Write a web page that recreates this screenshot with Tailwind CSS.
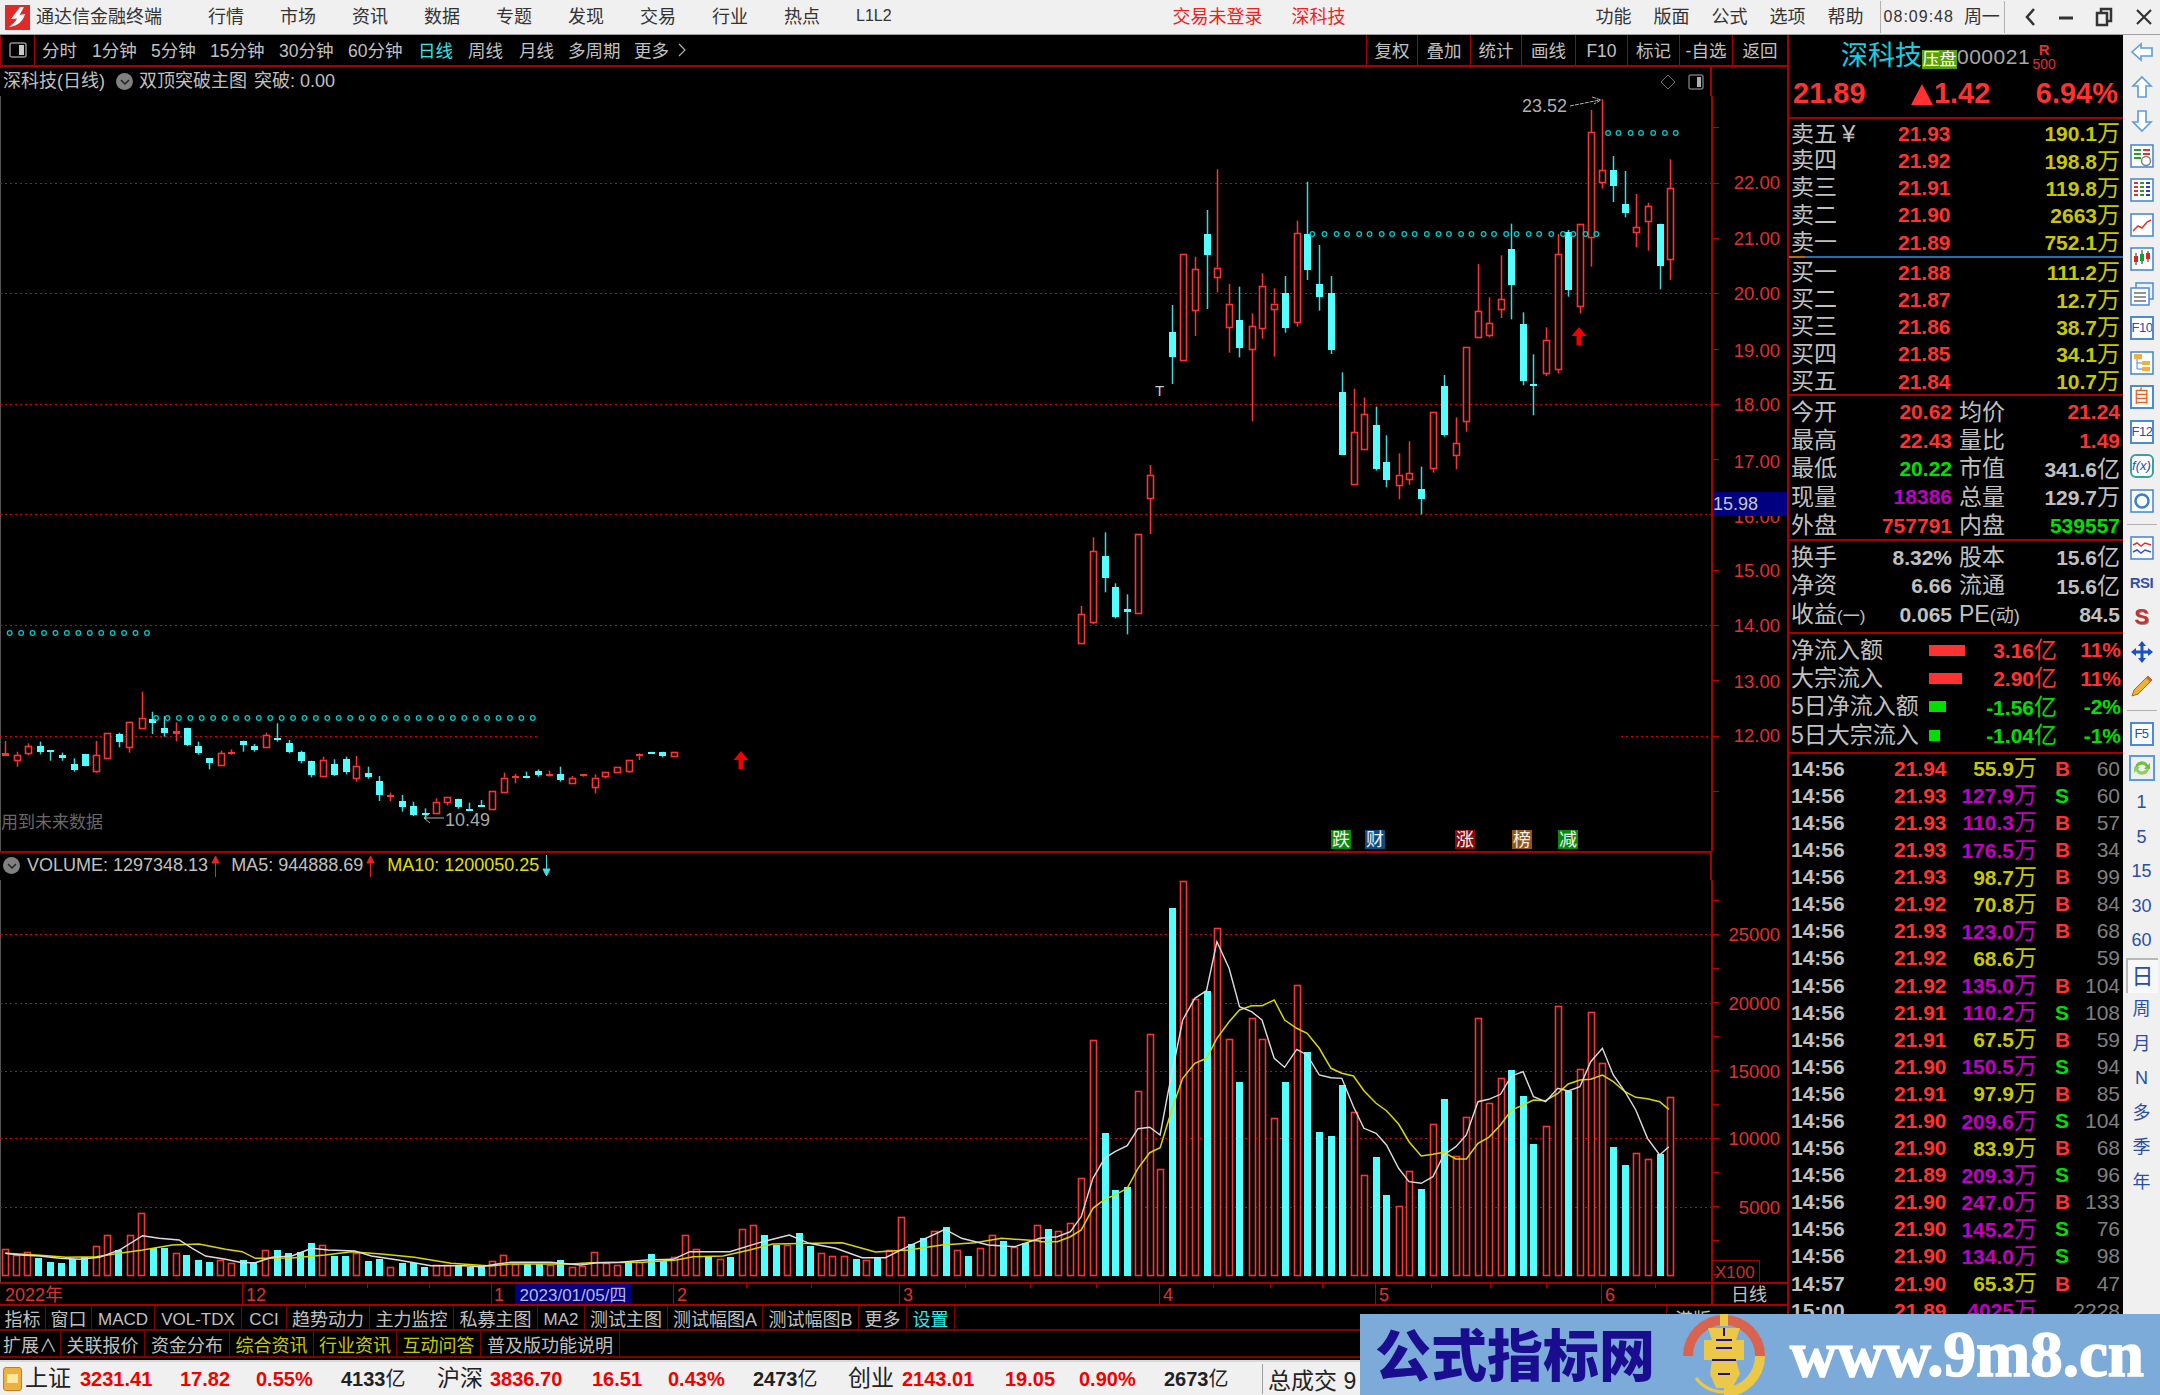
<!DOCTYPE html>
<html lang="zh-CN">
<head>
<meta charset="UTF-8" />
<title>通达信金融终端</title>
<script src="https://cdn.jsdelivr.net/npm/@tailwindcss/browser@4"></script>
</head>
<body class="bg-black">
<div class="relative w-[2160px] h-[1395px] overflow-hidden flex flex-col bg-black text-[#c0c0c0] [font-family:'Liberation_Sans','Noto_Sans_CJK_SC',sans-serif]">

  <!-- title bar -->
  <header class="h-[35px] shrink-0 flex items-center bg-[#f0f0f0] border-b border-[#a0a0a0] text-[#333] text-[18px] relative">
    <svg class="ml-[5px] w-[25px] h-[25px]" viewBox="0 0 25 25"><rect width="25" height="25" fill="#e02a2a"/><path d="M15 2 L6 14 L12 13.5 C10 17 8 19 4 22 C12 21 18 17 20 9 L14.500 10 L19 2 Z" fill="#fff"/></svg>
    <span class="ml-[6px] w-[172px]">通达信金融终端</span>
    <nav class="flex gap-[36px]">
      <span>行情</span><span>市场</span><span>资讯</span><span>数据</span><span>专题</span><span>发现</span><span>交易</span><span>行业</span><span>热点</span><span class="text-[16px]">L1L2</span>
    </nav>
    <span class="ml-[281px] text-[#f02020]">交易未登录</span>
    <span class="ml-[29px] text-[#f02020]">深科技</span>
    <nav class="ml-[250px] flex gap-[22px]"><span>功能</span><span>版面</span><span>公式</span><span>选项</span><span>帮助</span></nav>
    <div class="ml-[16px] h-[32px] w-[125px] flex items-center gap-[10px] border-x border-[#b0b0b0] pl-[3px]"><span class="text-[16px] tracking-[1px]">08:09:48</span><span>周一</span></div>
    <div class="ml-[18px] flex items-center gap-[22px] text-[#333]">
      <svg class="w-[14px] h-[20px]" viewBox="0 0 14 20"><path d="M11 2 L4 10 L11 18" fill="none" stroke="#333" stroke-width="2.500"/></svg>
      <svg class="w-[14px] h-[20px]" viewBox="0 0 14 20"><path d="M0 11 H14" stroke="#333" stroke-width="3"/></svg>
      <svg class="w-[18px] h-[20px]" viewBox="0 0 18 20"><rect x="6" y="2" width="10" height="12" fill="none" stroke="#333" stroke-width="2.500"/><rect x="2" y="6" width="10" height="12" fill="#f0f0f0" stroke="#333" stroke-width="2.500"/></svg>
      <svg class="w-[18px] h-[20px]" viewBox="0 0 18 20"><path d="M2 3 L16 17 M16 3 L2 17" stroke="#333" stroke-width="2.200"/></svg>
    </div>
  </header>

  <div class="flex-1 min-h-0 flex">
    <!-- chart column -->
    <main class="w-[1787px] shrink-0 flex flex-col">
      <!-- toolbar -->
      <div class="h-[32px] shrink-0 flex items-center border-b-2 border-[#a80000] text-[17.500px]">
        <div class="w-[35px] h-full flex items-center justify-center border-x border-[#a80000]">
          <svg class="w-[18px] h-[16px]" viewBox="0 0 18 16"><rect x="1" y="1" width="16" height="14" rx="2" fill="none" stroke="#909090" stroke-width="1.500"/><rect x="10" y="3" width="5" height="10" fill="#c8c8c8"/></svg>
        </div>
        <div class="flex pl-[7px] pt-[2px]" id="periodTabs">
          <span class="w-[50px]">分时</span><span class="w-[59px]">1分钟</span><span class="w-[59px]">5分钟</span><span class="w-[69px]">15分钟</span><span class="w-[69px]">30分钟</span><span class="w-[70px]">60分钟</span><span class="w-[50px] text-[#30e8e8]">日线</span><span class="w-[51px]">周线</span><span class="w-[49px]">月线</span><span class="w-[66px]">多周期</span><span class="w-[43px]">更多</span>
          <svg class="w-[10px] h-[24px]" viewBox="0 0 10 24"><path d="M2 6 L8 12 L2 18" fill="none" stroke="#b0b0b0" stroke-width="1.200"/></svg>
        </div>
        <div class="ml-auto h-full flex text-center leading-[32px]">
          <span class="w-[51px] border-l border-[#a80000]">复权</span><span class="w-[53px] border-l border-[#a80000]">叠加</span><span class="w-[51px] border-l border-[#a80000]">统计</span><span class="w-[54px] border-l border-[#a80000]">画线</span><span class="w-[52px] border-l border-[#a80000]">F10</span><span class="w-[52px] border-l border-[#a80000]">标记</span><span class="w-[53px] border-l border-[#a80000]">-自选</span><span class="w-[55px] border-l border-[#a80000]">返回</span>
        </div>
      </div>
      <!-- chart title row -->
      <div class="h-[29px] shrink-0 flex items-center w-[1712px] border-r-2 border-[#a80000] text-[18px] pl-[3px]">
        <span>深科技(日线)</span>
        <span class="ml-[11px] w-[17px] h-[17px] rounded-full bg-[#808080] flex items-center justify-center"><svg class="w-[10px] h-[8px]" viewBox="0 0 10 8"><path d="M1 2 L5 6 L9 2" fill="none" stroke="#222" stroke-width="1.500"/></svg></span>
        <span class="ml-[6px]">双顶突破主图</span>
        <span class="ml-[7px]">突破: 0.00</span>
        <svg class="ml-auto w-[16px] h-[16px]" viewBox="0 0 16 16"><path d="M8 1 L15 8 L8 15 L1 8 Z" fill="none" stroke="#707070"/></svg>
        <svg class="ml-[12px] mr-[6px] w-[16px] h-[16px]" viewBox="0 0 16 16"><rect x="1" y="1" width="14" height="14" rx="2" fill="none" stroke="#707070" stroke-width="1.500"/><rect x="9" y="3" width="4" height="10" fill="#b0b0b0"/></svg>
      </div>
      <!-- price chart: page coordinates -->
      <svg id="priceChart" class="block w-[1787px] h-[755px] shrink-0" viewBox="0 96 1787 755"></svg>
      <!-- volume header -->
      <div class="h-[29px] shrink-0 w-[1712px] border-t-2 border-r-2 border-[#a80000] flex items-center text-[18px] pl-[3px] pb-[2px] whitespace-nowrap">
        <span class="w-[17px] h-[17px] rounded-full bg-[#808080] flex items-center justify-center"><svg class="w-[10px] h-[8px]" viewBox="0 0 10 8"><path d="M1 2 L5 6 L9 2" fill="none" stroke="#222" stroke-width="1.500"/></svg></span>
        <span class="ml-[7px]">VOLUME: 1297348.13</span>
        <svg class="ml-[3px] w-[9px] h-[22px]" viewBox="0 0 9 22"><path d="M4.500 22 V2 M1 8 L4.500 1 L8 8 Z" fill="#f02020" stroke="#f02020"/></svg>
        <span class="ml-[11px]">MA5: 944888.69</span>
        <svg class="ml-[3px] w-[9px] h-[22px]" viewBox="0 0 9 22"><path d="M4.500 22 V2 M1 8 L4.500 1 L8 8 Z" fill="#f02020" stroke="#f02020"/></svg>
        <span class="ml-[12px] text-[#e0e000]">MA10: 1200050.25</span>
        <svg class="ml-[3px] w-[9px] h-[22px]" viewBox="0 0 9 22"><path d="M4.500 0 V20 M1 14 L4.500 21 L8 14 Z" fill="#40e0e0" stroke="#40e0e0"/></svg>
      </div>
      <!-- volume chart -->
      <svg id="volumeChart" class="block w-[1787px] h-[402px] shrink-0" viewBox="0 880 1787 402"></svg>
      <!-- date row -->
      <div id="dateRow" class="relative h-[24px] shrink-0 flex border-y-2 border-[#a80000] text-[18px] leading-[23px] text-[#e03030]">
        <span class="w-[242px] pl-[5px]">2022年</span>
        <span class="w-[249px] pl-[3px] border-l border-[#a80000]">12</span>
        <span class="w-[24px] pl-[2px] border-l border-[#a80000]">1</span>
        <span class="w-[116px] text-center bg-[#000080] text-[#b8b8e0] text-[17px] overflow-hidden">2023/01/05/四</span>
        <span class="w-[42px]"></span>
        <span class="w-[226px] pl-[3px] border-l border-[#a80000]">2</span>
        <span class="w-[260px] pl-[3px] border-l border-[#a80000]">3</span>
        <span class="w-[216px] pl-[3px] border-l border-[#a80000]">4</span>
        <span class="w-[226px] pl-[3px] border-l border-[#a80000]">5</span>
        <span class="w-[110px] pl-[3px] border-l border-[#a80000]">6</span>
        <span class="w-[74px] text-center text-[#c0c0c0] border-l-2 border-[#a80000]">日线</span>
      </div>
      <!-- tab rows -->
      <div class="h-[25px] shrink-0 flex text-[18px] leading-[28px] text-center border-b-2 border-[#800000]">
        <span class="w-[46px] border-r border-[#800000]">指标</span><span class="w-[46px] border-r border-[#800000]">窗口</span><span class="w-[63px] border-r border-[#800000] text-[17px]">MACD</span><span class="w-[87px] border-r border-[#800000] text-[17px]">VOL-TDX</span><span class="w-[45px] border-r border-[#800000] text-[17px]">CCI</span><span class="w-[83px] border-r border-[#800000]">趋势动力</span><span class="w-[84px] border-r border-[#800000]">主力监控</span><span class="w-[84px] border-r border-[#800000]">私募主图</span><span class="w-[47px] border-r border-[#800000] text-[17px]">MA2</span><span class="w-[83px] border-r border-[#800000]">测试主图</span><span class="w-[95px] border-r border-[#800000]">测试幅图A</span><span class="w-[96px] border-r border-[#800000]">测试幅图B</span><span class="w-[48px] border-r border-[#800000]">更多</span><span class="w-[48px] border-r border-[#800000] text-[#30e8e8]">设置</span>
        <span class="ml-auto w-[121px] border-l border-[#800000] text-left pl-[8px] overflow-hidden">港版</span>
      </div>
      <div class="h-[27px] shrink-0 flex text-[18px] leading-[31px] text-center border-b-2 border-[#800000]">
        <span class="w-[61px] border-r border-[#800000]">扩展∧</span><span class="w-[84px] border-r border-[#800000]">关联报价</span><span class="w-[85px] border-r border-[#800000]">资金分布</span><span class="w-[84px] border-r border-[#800000] text-[#c8c800]">综合资讯</span><span class="w-[83px] border-r border-[#800000] text-[#c8c800]">行业资讯</span><span class="w-[84px] border-r border-[#800000] text-[#c8c800]">互动问答</span><span class="w-[139px] border-r border-[#800000]">普及版功能说明</span>
      </div>
    </main>

    <!-- quote panel -->
    <aside class="w-[336px] shrink-0 border-l-2 border-[#a80000] overflow-hidden flex flex-col">
      <div class="h-[84px] shrink-0 border-b-2 border-[#a80000] relative">
        <div class="flex items-center h-[42px] pl-[52px] whitespace-nowrap">
          <span class="text-[27px] text-[#14cfe4]">深科技</span>
          <span class="w-[35px] h-[19px] mt-[6px] bg-[#5aa000] text-white text-[17px] leading-[19px] text-center">压盘</span>
          <span class="text-[21px] text-[#a8a8a8] tracking-[0.5px] mt-[2px]">000021</span>
          <span class="ml-[3px] w-[22px] flex flex-col items-center text-[#e03030] leading-none"><span class="text-[15px] font-bold">R</span><span class="text-[14px]">500</span></span>
        </div>
        <div class="flex items-center h-[34px] pl-[4px] pr-[5px] text-[29px] font-bold text-[#ff3232] justify-between">
          <span>21.89</span><span class="flex items-center"><span class="w-0 h-0 border-x-[11px] border-x-transparent border-b-[21px] border-b-[#ff3232] mr-[1px]"></span>1.42</span><span>6.94%</span>
        </div>
      </div>
      <div id="askRows" class="h-[137px] pt-[1px] shrink-0"></div>
      <div class="h-[2px] shrink-0 flex"><span class="w-[16px] bg-[#b06a10]"></span><span class="flex-1 bg-[#2a6ca8]"></span></div>
      <div id="bidRows" class="h-[138px] pt-[1px] shrink-0 border-b-2 border-[#a80000]"></div>
      <div id="statA" class="h-[145px] pt-[2px] shrink-0 border-b-2 border-[#a80000]"></div>
      <div id="statB" class="h-[93px] pt-[2px] shrink-0 border-b-2 border-[#a80000]"></div>
      <div id="flowRows" class="h-[120px] pt-[2px] shrink-0 border-b-2 border-[#a80000]"></div>
      <div id="tradeRows" class="flex-1 pt-[1px]"></div>
    </aside>

    <!-- right icon strip -->
    <nav id="strip" class="flex-1 bg-[#f0f0f0] flex flex-col items-center text-[18px] text-[#2a4fa0]"></nav>
  </div>

  <!-- status bar -->
  <footer class="h-[35px] shrink-0 flex items-center bg-[#f0f0f0] border-t-2 border-[#d8d8d8] whitespace-nowrap text-[#222] text-[20px] font-bold">
    <span class="ml-[3px] w-[19px] h-[24px] rounded-[3px] bg-[#f0b040] border border-[#c08020] flex items-center justify-center"><span class="w-[11px] h-[9px] bg-[#ffe9a0]"></span></span>
    <span class="ml-[3px] w-[55px] text-[23px] font-normal">上证</span><span class="w-[100px] text-[#f00000]">3231.41</span><span class="w-[76px] text-[#f00000]">17.82</span><span class="w-[85px] text-[#f00000]">0.55%</span><span class="w-[96px]">4133<span class="font-normal">亿</span></span>
    <span class="w-[53px] text-[23px] font-normal">沪深</span><span class="w-[102px] text-[#f00000]">3836.70</span><span class="w-[76px] text-[#f00000]">16.51</span><span class="w-[85px] text-[#f00000]">0.43%</span><span class="w-[95px]">2473<span class="font-normal">亿</span></span>
    <span class="w-[54px] text-[23px] font-normal">创业</span><span class="w-[103px] text-[#f00000]">2143.01</span><span class="w-[74px] text-[#f00000]">19.05</span><span class="w-[85px] text-[#f00000]">0.90%</span><span class="w-[98px]">2673<span class="font-normal">亿</span></span>
    <span class="border-l border-[#a0a0a0] h-[30px] pl-[5px] text-[23px] font-normal">总成交 9</span>
  </footer>

  <!-- watermark banner -->
  <div class="absolute left-[1360px] top-[1314px] w-[800px] h-[81px] bg-[#7dabd9] flex items-center whitespace-nowrap">
    <span class="ml-[15px] mb-[6px] text-[56px] leading-none font-black text-[#1a0d8f] [font-family:'Noto_Sans_CJK_SC',sans-serif]">公式指标网</span>
    <svg class="ml-[27px] w-[84px] h-[81px]" viewBox="0 0 84 81">
      <path d="M6 42 A35 35 0 0 1 78 42" fill="none" stroke="#d9634f" stroke-width="10"/>
      <path d="M78 42 A36 36 0 0 1 42 78" fill="none" stroke="#ecc848" stroke-width="10"/>
      <path d="M42 78 A36 36 0 0 1 14 64" fill="none" stroke="#ecc848" stroke-width="3"/>
      <rect x="38" y="0" width="8" height="12" fill="#ecc848"/>
      <path d="M26 14 H58 L54 26 H62 V46 H54 L58 60 L50 74 H34 L28 60 L30 46 H22 V26 H30 Z" fill="#ecc848"/>
      <path d="M34 26 H50 M34 34 H50 M30 46 H54 M42 14 V22 M36 60 H48" stroke="#1a0d8f" stroke-width="2"/>
    </svg>
    <span class="ml-[24px] text-[65px] leading-none font-bold text-white [font-family:'Liberation_Serif',serif] [-webkit-text-stroke:1.5px_white]">www.9m8.cn</span>
  </div>
</div>

<script>
  const RED = "#ff3232", CYAN = "#54ffff";

  // candles as read off the chart: [x, wickTop, bodyTop, bodyBottom, wickBottom, kind]
  // kind: r hollow red, R solid red, c solid cyan
  const leftCandles = [
    [10,363,400,408,408,"R"],[36,395,405,420,440,"r"],[58,370,378,398,405,"r"],[82,365,377,395,403,"c"],[103,391,391,398,422,"c"],[127,398,404,413,422,"c"],[152,415,432,450,455,"c"],[175,403,403,439,439,"c"],
    [199,363,405,453,458,"r"],[221,338,338,412,416,"r"],[246,338,342,367,382,"c"],[267,305,306,380,398,"r"],[292,215,293,322,322,"r"],[314,275,297,309,342,"c"],[339,288,323,337,350,"c"],[363,307,333,341,363,"R"],
    [385,323,323,373,378,"c"],[409,365,378,400,404,"c"],[431,414,414,430,448,"c"],[456,392,400,435,435,"r"],[477,388,396,399,404,"R"],[502,362,364,376,395,"c"],[524,372,378,390,395,"c"],[549,338,346,381,381,"r"],
    [571,310,355,358,365,"c"],[596,360,369,396,400,"c"],[620,392,395,422,430,"c"],[642,422,422,463,472,"c"],[667,410,419,466,466,"r"],[689,418,431,464,468,"c"],[713,410,418,458,463,"c"],[735,408,437,474,485,"r"],
    [759,440,459,472,476,"c"],[782,468,482,525,543,"c"],[805,518,524,527,543,"R"],[830,525,544,561,575,"c"],[852,545,557,584,588,"c"],[877,565,580,583,598,"c"],[899,535,545,579,579,"r"],[923,532,532,547,556,"r"],
    [945,536,536,561,566,"c"],[968,548,566,569,569,"c"],[992,540,554,560,560,"c"],[1016,514,514,569,569,"r"],[1039,458,473,515,515,"r"],[1062,462,467,474,490,"R"],[1086,455,467,471,475,"c"],[1109,448,454,467,470,"c"],
    [1133,452,463,470,470,"R"],[1156,440,463,482,485,"c"],[1180,468,473,488,488,"r"],[1203,463,463,470,470,"R"],[1227,463,473,500,520,"r"],[1248,455,455,466,475,"r"],[1273,442,442,457,457,"r"],[1298,419,419,453,458,"r"],
    [1319,400,403,406,420,"R"],[1344,395,395,399,399,"c"],[1366,395,395,407,412,"c"],[1390,395,395,407,407,"r"]
  ];
  const midCandles = [
    [94,318,343,430,430,"r"],[122,112,153,367,372,"r"],[149,97,167,232,277,"c"],[173,250,260,350,355,"c"],[201,283,327,336,403,"c"],[226,103,103,340,340,"r"]
  ];
  const rightCandles = [
    [253,1155,1184,1253,1362,"r"],[305,675,755,831,912,"c"],[329,522,522,839,839,"r"],[357,530,567,690,768,"r"],[384,390,462,525,687,"c"],[408,268,563,591,637,"r"],[436,612,671,740,818,"r"],[460,620,719,804,832,"c"],
    [488,700,738,808,1024,"r"],[512,580,617,744,776,"r"],[540,625,671,686,830,"r"],[564,588,638,742,758,"c"],[592,422,459,726,740,"r"],[616,305,463,570,600,"c"],[644,495,612,651,692,"c"],[671,588,638,808,822,"c"],
    [696,877,935,1123,1123,"c"],[723,926,1057,1213,1213,"r"],[747,953,1003,1109,1109,"r"],[775,980,1035,1168,1172,"c"],[799,1066,1147,1200,1222,"c"],[827,1120,1184,1213,1258,"r"],[851,1084,1180,1198,1214,"r"],[879,1160,1228,1258,1303,"c"],
    [906,995,995,1163,1178,"r"],[931,885,918,1066,1070,"c"],[959,1012,1090,1127,1168,"r"],[983,801,801,1023,1055,"r"],[1010,552,693,772,772,"r"],[1035,652,730,767,772,"r"],[1062,526,657,686,714,"r"],[1087,431,508,615,718,"c"],
    [1114,697,733,903,916,"c"],[1138,823,912,916,1006,"c"],[1166,742,779,879,888,"r"],[1194,462,522,866,880,"r"],[1218,450,455,628,650,"c"],[1245,432,432,677,700,"r"],[1270,90,157,473,560,"r"],[1297,58,270,306,326,"r"],
    [1322,228,270,317,366,"c"],[1349,273,372,398,412,"c"],[1374,342,441,457,502,"r"],[1401,368,379,425,512,"r"],[1429,431,431,556,628,"c"],[1453,238,325,537,600,"r"]
  ];

  function candle(cx, wt, bt, bb, wb, kind) {
    const x = Math.round(cx);
    if (kind === "r") {
      return `<rect x="${x-.25}" y="${wt}" width="1.500" height="${Math.max(bt-wt,0)}" fill="${RED}"/>` +
             `<rect x="${x-.25}" y="${bb}" width="1.500" height="${Math.max(wb-bb,0)}" fill="${RED}"/>` +
             `<rect x="${x-2.5}" y="${Math.round(bt)+.5}" width="6" height="${Math.round(bb-bt)}" fill="#000" stroke="${RED}" stroke-width="1.600"/>`;
    }
    const col = kind === "c" ? CYAN : RED;
    return `<rect x="${x-.25}" y="${wt}" width="1.500" height="${wb-wt}" fill="${kind === "c" ? "#3cd8d8" : RED}"/>` +
           `<rect x="${x-3}" y="${Math.round(bt)}" width="7" height="${Math.max(Math.round(bb-bt),2)}" fill="${col}"/>`;
  }
  const ring = (x, y, col) => `<circle cx="${x}" cy="${y}" r="2.300" fill="none" stroke="${col}" stroke-width="1.300"/>`;
  const dotted = (x1, x2, y) => `<path d="M${x1} ${y+.5} H${x2}" stroke="#d80000" stroke-dasharray="2 3"/>`;
  const upArrow = (x, y) => `<path d="M${x} ${y} l7.500 9 h-5 v9 h-5 v-9 h-5 Z" fill="#f00000"/>`;
  const txt = (x, y, s, fill, size, anchor) => `<text x="${x}" y="${y}" fill="${fill}" font-size="${size}" text-anchor="${anchor || "start"}">${s}</text>`;

  // price pane
  let p = `<rect x="0" y="96" width="1" height="755" fill="#555"/>`;
  [183,293,404,514,625].forEach(y => p += dotted(0,1711,y));
  p += dotted(0,539,736) + dotted(1621,1711,736);
  for (let i = 0; i < 13; i++) p += `<rect x="1711" y="${Math.round(127.4+i*55.3)}" width="8" height="1" fill="#c00000"/>`;
  leftCandles.forEach(c => p += candle(c[0]/2.063, ...c.slice(1,5).map(v => 620+v/3), c[5]));
  midCandles.forEach(c => p += candle(1040+c[0]/2.306, ...c.slice(1,5).map(v => 500+v/3), c[5]));
  rightCandles.forEach(c => p += candle(1040+c[0]/2.306, ...c.slice(1,5).map(v => 80+v/3), c[5]));
  [628,656,684,708,736,760,788,812,840,864,892,919,943,971,995,1023,1047,1075,1099,1127,1151,1179,1206,1230,1258,1283].forEach(X => p += ring(1040+X/2.306,234,"#00c8c8"));
  [1310,1334,1362,1386,1414,1441,1466].forEach(X => p += ring(1040+X/2.306,133,"#00c8c8"));
  for (let i = 0; i < 13; i++) p += ring((20+i*23.6)/2.063,633,"#00c8c8");
  for (let i = 0; i < 34; i++) p += ring((322+i*23.55)/2.063,718,"#00c8c8");
  p += upArrow(1579,327) + upArrow(741,751);
  p += txt(1522,112,"23.52","#b0b0b0",18);
  p += `<path d="M1570 106 L1600 100 M1592 97 L1601 100 L1594 104" fill="none" stroke="#b0b0b0" stroke-dasharray="4 1"/>`;
  p += `<path d="M444 818 H424 M430 813 L424 818 L430 823" fill="none" stroke="#b0b0b0"/>`;
  p += txt(445,826,"10.49","#a8a8a8",18) + txt(1,828,"用到未来数据","#686868",17);
  p += txt(1155,396,"T","#c8c8c8",15);
  [["跌","#0a8a0a",1331],["财","#0f4a80",1365],["涨","#8a0a0a",1455],["榜","#96540f",1512],["减","#0a8a0a",1558]].forEach(b => {
    p += `<rect x="${b[2]}" y="830" width="20" height="19" fill="${b[1]}"/>` + txt(b[2]+1,846,b[0],"#f0f0f0",18);
  });
  p += `<rect x="1711" y="96" width="2" height="755" fill="#a80000"/>`;
  [["22.00",182],["21.00",238],["20.00",293],["19.00",350],["18.00",404],["17.00",461],["16.00",516],["15.00",570],["14.00",625],["13.00",681],["12.00",735]].forEach(t => p += txt(1780,t[1]+7,t[0],"#e03030",18.500,"end"));
  p += `<rect x="1713" y="492" width="74" height="24" fill="#000080"/>` + txt(1713,510,"15.98","#c8c8c8",18);
  document.getElementById("priceChart").innerHTML = p;

  // volume pane
  const leftVol = [[7,236,"r"],[24,255,"r"],[41,245,"r"],[58,263,"c"],[75,276,"c"],[92,280,"c"],[109,268,"c"],[126,262,"c"],[145,227,"r"],[161,196,"r"],[178,240,"c"],[196,195,"r"],[213,128,"r"],[230,233,"c"],[247,235,"c"],[265,250,"r"],[281,254,"c"],[299,271,"c"],[315,275,"c"],[332,270,"r"],[349,280,"r"],[366,270,"c"],[382,275,"c"],[400,240,"r"],[417,240,"c"],[434,250,"c"],[452,245,"c"],[469,218,"c"],[486,226,"r"],[503,258,"c"],[520,258,"c"],[537,250,"r"],[555,272,"c"],[571,267,"c"],[588,290,"r"],[606,280,"c"],[623,278,"c"],[640,290,"c"],[657,285,"r"],[674,285,"r"],[691,285,"c"],[708,290,"c"],[725,290,"c"],[742,272,"r"],[759,254,"r"],[776,282,"r"],[795,282,"c"],[812,283,"c"],[829,285,"r"],[845,271,"c"],[862,290,"r"],[878,288,"r"],[896,245,"r"],[913,280,"r"],[930,285,"r"],[947,278,"c"],[964,275,"r"],[982,253,"c"],[999,272,"c"],[1016,260,"r"],[1033,195,"r"],[1050,236,"r"],[1067,262,"c"],[1085,268,"r"],[1101,262,"c"],[1118,178,"r"],[1136,164,"r"],[1152,195,"c"],[1170,225,"c"],[1187,225,"r"],[1204,190,"c"],[1221,227,"c"],[1238,250,"r"],[1255,258,"r"],[1272,258,"r"],[1290,267,"c"],[1306,270,"r"],[1323,264,"c"],[1340,240,"r"],[1358,141,"r"],[1374,223,"c"],[1392,204,"c"],[1408,182,"r"],[1426,172,"c"],[1443,240,"r"],[1460,258,"c"],[1478,235,"r"],[1495,195,"r"],[1512,212,"c"],[1529,230,"r"],[1546,218,"c"],[1563,165,"r"]];
  const rightVol = [[18,1107,"c"],[42,1112,"r"],[70,1090,"r"],[94,955,"r"],[122,541,"r"],[149,819,"c"],[173,990,"c"],[201,982,"c"],[226,694,"r"],[253,523,"r"],[277,928,"r"],[305,143,"c"],[329,63,"r"],[357,418,"r"],[384,392,"c"],[408,203,"r"],[436,537,"r"],[460,666,"c"],[488,473,"r"],[512,537,"r"],[540,775,"r"],[564,666,"c"],[592,374,"r"],[616,576,"c"],[644,815,"c"],[671,828,"c"],[696,675,"c"],[723,757,"r"],[747,946,"r"],[775,891,"c"],[799,1004,"c"],[827,1037,"r"],[851,932,"r"],[879,986,"c"],[906,793,"r"],[931,716,"c"],[959,887,"r"],[983,771,"r"],[1010,473,"r"],[1035,730,"r"],[1062,653,"r"],[1087,630,"c"],[1114,707,"c"],[1138,851,"c"],[1166,798,"r"],[1194,437,"r"],[1218,693,"c"],[1245,626,"r"],[1270,455,"r"],[1297,608,"r"],[1322,860,"c"],[1349,914,"c"],[1374,879,"r"],[1401,897,"r"],[1429,882,"c"],[1453,712,"r"]];
  const BASE = 1276;
  function volBar(cx, top, kind) {
    const x = Math.round(cx), y = Math.round(top);
    return kind === "c"
      ? `<rect x="${x-3}" y="${y}" width="7" height="${BASE-y}" fill="${CYAN}"/>`
      : `<rect x="${x-2.5}" y="${y+.5}" width="6" height="${BASE-y-1}" fill="#000" stroke="${RED}" stroke-width="1.600"/>`;
  }
  let v = `<rect x="0" y="880" width="1" height="402" fill="#555"/>`;
  [934,1003,1071,1138,1207].forEach(y => v += dotted(0,1711,y));
  for (let i = 0; i < 12; i++) v += `<rect x="1711" y="${Math.round(900+i*34)}" width="8" height="1" fill="#c00000"/>`;
  leftVol.forEach(b => v += volBar(b[0]/1.5077, 1170+b[1]/3, b[2]));
  rightVol.forEach(b => v += volBar(1040+b[0]/2.306, 860+b[1]/3, b[2]));
  const pts = (list, fx, fy) => list.map(q => `${(fx(q[0])).toFixed(1)},${(fy(q[1])).toFixed(1)}`).join(" ");
  const L = X => X/1.5077, Ly = Y => 1170+Y/3, R = X => 1040+X/2.306, Ry = Y => 860+Y/3;
  const white = pts([[8,250],[30,255],[60,258],[90,265],[120,268],[150,262],[180,240],[215,197],[240,205],[270,210],[290,235],[310,258],[340,268],[365,278],[385,278],[410,262],[440,258],[470,235],[495,240],[535,243],[560,258],[600,270],[650,287],[700,287],[725,290],[750,282],[770,277],[830,277],[875,285],[900,278],[935,277],[975,270],[1015,268],[1040,245],[1100,245],[1150,215],[1190,195],[1220,220],[1260,235],[1300,263],[1335,263],[1360,238],[1425,178],[1450,205],[1490,225],[1530,230],[1568,205]],L,Ly)
    + " " + pts([[0,1135],[40,1130],[70,1115],[95,1070],[122,955],[149,895],[173,875],[201,857],[226,806],[253,802],[277,825],[295,700],[329,480],[357,415],[384,392],[408,245],[436,325],[460,440],[488,455],[512,480],[540,595],[564,622],[592,568],[616,585],[644,645],[671,653],[696,655],[723,740],[747,805],[775,820],[799,855],[827,925],[851,965],[879,970],[906,950],[931,885],[959,860],[983,825],[1010,725],[1035,718],[1062,703],[1087,648],[1114,635],[1138,710],[1166,725],[1194,685],[1218,693],[1245,680],[1270,605],[1297,565],[1322,645],[1349,695],[1374,750],[1401,835],[1429,885],[1450,860]],R,Ry);
  const yellow = pts([[8,250],[60,256],[100,262],[145,260],[180,250],[215,240],[260,225],[300,222],[340,238],[365,245],[385,265],[440,264],[490,255],[530,245],[575,252],[625,262],[680,280],[740,288],[770,282],[860,282],[890,278],[970,277],[1020,270],[1045,260],[1090,258],[1130,240],[1165,222],[1270,218],[1320,246],[1370,240],[1420,225],[1470,218],[1510,205],[1568,213]],L,Ly)
    + " " + pts([[0,1145],[40,1145],[70,1130],[95,1110],[122,1045],[149,1018],[173,1005],[201,985],[226,925],[253,878],[277,863],[305,745],[329,655],[357,610],[384,595],[408,535],[436,485],[460,450],[488,437],[512,437],[540,420],[564,480],[592,505],[616,520],[644,565],[671,625],[696,640],[723,648],[747,692],[775,730],[799,752],[827,792],[851,845],[879,888],[906,883],[931,877],[959,897],[983,897],[1010,850],[1035,832],[1062,795],[1087,750],[1114,735],[1138,720],[1166,722],[1194,700],[1218,672],[1245,660],[1270,658],[1297,645],[1322,665],[1349,695],[1374,712],[1401,716],[1429,725],[1450,748]],R,Ry);
  v += `<polyline points="${yellow}" fill="none" stroke="#d8d800" stroke-width="1.500"/>`;
  v += `<polyline points="${white}" fill="none" stroke="#dcdcdc" stroke-width="1.400"/>`;
  v += `<rect x="1711" y="880" width="2" height="402" fill="#a80000"/>`;
  [["25000",934],["20000",1003],["15000",1071],["10000",1138],["5000",1207]].forEach(t => v += txt(1780,t[1]+7,t[0],"#e03030",18.500,"end"));
  v += `<rect x="1711.500" y="1260.500" width="48" height="22" fill="none" stroke="#a80000"/>` + txt(1715,1278,"X100","#c03030",17);
  document.getElementById("volumeChart").innerHTML = v;

  // date axis ticks
  const dateRow = document.getElementById("dateRow");
  [305,367,429,746,811,965,1030,1096,1213,1270,1322,1431,1490,1546,1655].forEach(x => {
    const t = document.createElement("i");
    t.className = "absolute top-0 w-px h-[4px] bg-[#a80000]";
    t.style.left = x + "px";
    dateRow.appendChild(t);
  });

  // quote rows
  const levelRow = (name, price, vol, note) => `<div class="h-[27.2px] flex items-center pl-[2px] pr-[3px] whitespace-nowrap">
      <span class="w-[107px] text-[23px] leading-none">${name}${note ? `<span class="ml-[5px] text-[24px]">${note}</span>` : ""}</span>
      <span class="text-[21px] font-bold text-[#ff3232]">${price}</span>
      <span class="ml-auto text-[21px] font-bold text-[#c8c800]">${vol}<span class="font-normal text-[23px]">万</span></span>
    </div>`;
  document.getElementById("askRows").innerHTML = [["卖五","21.93","190.1","¥"],["卖四","21.92","198.8"],["卖三","21.91","119.8"],["卖二","21.90","2663"],["卖一","21.89","752.1"]].map(r => levelRow(...r)).join("");
  document.getElementById("bidRows").innerHTML = [["买一","21.88","111.2"],["买二","21.87","12.7"],["买三","21.86","38.7"],["买四","21.85","34.1"],["买五","21.84","10.7"]].map(r => levelRow(...r)).join("");

  const RD = "text-[#ff3232]", GN = "text-[#00e000]", GY = "text-[#c0c0c0]", PU = "text-[#c000c0]";
  const statRow = (h, a, av, ac, b, bv, bc) => `<div class="${h} flex items-center pl-[2px] pr-[3px] whitespace-nowrap">
      <span class="w-[60px] text-[23px] leading-none">${a}</span>
      <span class="w-[101px] text-right text-[21px] font-bold ${ac}">${av}</span>
      <span class="ml-[7px] text-[23px] leading-none">${b}</span>
      <span class="ml-auto text-[21px] font-bold ${bc}">${bv}</span>
    </div>`;
  const yi = s => s.replace(/([亿万])/, '<span class="font-normal text-[23px]">$1</span>');
  document.getElementById("statA").innerHTML = [
    ["今开","20.62",RD,"均价","21.24",RD],["最高","22.43",RD,"量比","1.49",RD],["最低","20.22",GN,"市值",yi("341.6亿"),GY],["现量","18386",PU,"总量",yi("129.7万"),GY],["外盘","757791",RD,"内盘","539557",GN]
  ].map(r => statRow("h-[28.3px]",r[0],r[1],r[2],r[3],r[4],r[5])).join("");
  document.getElementById("statB").innerHTML = [
    ["换手","8.32%",GY,"股本",yi("15.6亿"),GY],["净资","6.66",GY,"流通",yi("15.6亿"),GY],['收益<span class="text-[17px]">(一)</span>',"0.065",GY,'PE<span class="text-[18px]">(动)</span>',"84.5",GY]
  ].map(r => statRow("h-[28.5px]",r[0],r[1],r[2],r[3],r[4],r[5])).join("");

  const flowRow = (name, w, col, val, pct) => `<div class="h-[28.4px] flex items-center pl-[2px] pr-[2px] whitespace-nowrap ${col === "#ff3232" ? RD : GN}">
      <span class="w-[138px] text-[23px] leading-none text-[#c0c0c0]">${name}</span>
      <span class="w-[57px]"><span class="block h-[11px]" style="width:${w}px;background:${col}"></span></span>
      <span class="w-[71px] text-right text-[21px] font-bold">${yi(val)}</span>
      <span class="ml-auto text-[21px] font-bold">${pct}</span>
    </div>`;
  document.getElementById("flowRows").innerHTML = [
    ["净流入额",36,"#ff3232","3.16亿","11%"],["大宗流入",33,"#ff3232","2.90亿","11%"],["5日净流入额",17,"#00e000","-1.56亿","-2%"],["5日大宗流入",11,"#00e000","-1.04亿","-1%"]
  ].map(r => flowRow(...r)).join("");

  const trades = [["14:56","21.94","55.9","B","60"],["14:56","21.93","127.9","S","60"],["14:56","21.93","110.3","B","57"],["14:56","21.93","176.5","B","34"],["14:56","21.93","98.7","B","99"],["14:56","21.92","70.8","B","84"],["14:56","21.93","123.0","B","68"],["14:56","21.92","68.6","","59"],["14:56","21.92","135.0","B","104"],["14:56","21.91","110.2","S","108"],["14:56","21.91","67.5","B","59"],["14:56","21.90","150.5","S","94"],["14:56","21.91","97.9","B","85"],["14:56","21.90","209.6","S","104"],["14:56","21.90","83.9","B","68"],["14:56","21.89","209.3","S","96"],["14:56","21.90","247.0","B","133"],["14:56","21.90","145.2","S","76"],["14:56","21.90","134.0","S","98"],["14:57","21.90","65.3","B","47"],["15:00","21.89","4025","","2228"]];
  document.getElementById("tradeRows").innerHTML = trades.map(t => `<div class="h-[27.1px] flex items-center pl-[2px] pr-[3px] whitespace-nowrap text-[21px] font-bold">
      <span class="w-[103px] text-[#c0c0c0]">${t[0]}</span>
      <span class="w-[66px] text-[#ff3232]">${t[1]}</span>
      <span class="w-[77px] text-right ${parseFloat(t[2]) >= 100 ? "text-[#c000c0]" : "text-[#c8c800]"}">${t[2]}<span class="font-normal text-[23px]">万</span></span>
      <span class="ml-[18px] w-[16px] ${t[3] === "S" ? "text-[#00e000]" : "text-[#ff3232]"}">${t[3]}</span>
      <span class="ml-auto font-normal text-[#808080]">${t[4]}</span>
    </div>`).join("");

  // right icon strip
  const box = inner => `<svg class="w-[24px] h-[24px]" viewBox="0 0 24 24"><rect x="1" y="1" width="22" height="22" fill="#fff" stroke="#4a8ad8" stroke-width="1.600"/>${inner}</svg>`;
  const arrow = d => `<svg class="w-[24px] h-[24px]" viewBox="0 0 24 24"><path d="${d}" fill="#fff" stroke="#5b9ae0" stroke-width="1.600"/></svg>`;
  const lines = (ys, col, x1, x2) => ys.map(y => `<path d="M${x1} ${y} H${x2}" stroke="${col}" stroke-width="2"/>`).join("");
  const label = s => `<span class="block w-[24px] h-[24px] border-2 border-[#4a8ad8] bg-white text-[13px] leading-[20px] text-center text-[#2050b0] tracking-[-0.5px] overflow-hidden">${s}</span>`;
  const items = [
    arrow("M2 12 L11 4 V8 H22 V16 H11 V20 Z"),
    arrow("M12 2 L21 11 H16 V22 H8 V11 H3 Z"),
    arrow("M12 22 L21 13 H16 V2 H8 V13 H3 Z"),
    box(lines([6,10,14],"#2a9a2a",4,11)+lines([6,10,14],"#e03030",13,20)+`<circle cx="16" cy="17" r="4.500" fill="#fff" stroke="#808080" stroke-width="1.500"/>`),
    box(lines([5,9,13,17],"#e03030",4,8)+lines([5,9,13,17],"#2a9a2a",10,14)+lines([5,9,13,17],"#2040d0",16,20)),
    box(`<path d="M3 18 L8 13 L12 15 L17 9 L21 7" fill="none" stroke="#e03030" stroke-width="1.500"/>`),
    box(`<path d="M6 6 V18 M12 3 V17 M18 4 V15" stroke="#222"/><rect x="4" y="9" width="4" height="6" fill="#e02020"/><rect x="10" y="7" width="4" height="7" fill="#10a030"/><rect x="16" y="6" width="4" height="6" fill="#e02020"/>`),
    `<svg class="w-[24px] h-[24px]" viewBox="0 0 24 24"><rect x="6" y="1" width="17" height="16" fill="#eaf2ff" stroke="#4a8ad8" stroke-width="1.500"/><rect x="1" y="6" width="18" height="17" fill="#fff" stroke="#4a8ad8" stroke-width="1.500"/><path d="M4 11 H16 M4 15 H16 M4 19 H16" stroke="#707070" stroke-width="1.500"/></svg>`,
    label("F10"),
    box(`<rect x="4" y="3" width="8" height="5" fill="#f0b040"/><rect x="12" y="10" width="8" height="4" fill="#f0b040"/><rect x="12" y="16" width="8" height="4" fill="#f0b040"/><path d="M7 8 V18 H12 M7 12 H12" fill="none" stroke="#4a8ad8"/>`),
    `<span class="block w-[24px] h-[24px] border-2 border-[#4a8ad8] bg-white text-[17px] leading-[20px] text-center text-[#f06020]">自</span>`,
    label("F12"),
    `<span class="block w-[24px] h-[24px] rounded-[6px] border-2 border-[#3aa0a0] bg-white text-[13px] leading-[20px] text-center text-[#2050b0] italic">f(x)</span>`,
    box(`<circle cx="12" cy="12" r="6.500" fill="none" stroke="#3a80d0" stroke-width="2.500"/>`),
    "sep",
    box(`<path d="M3 9 L7 7 L11 10 L15 7 L21 9" fill="none" stroke="#e03030" stroke-width="1.500"/><path d="M3 16 L7 14 L11 17 L15 14 L21 16" fill="none" stroke="#3050d0" stroke-width="1.500"/>`),
    `<span class="text-[15px] font-bold text-[#3050b0] tracking-[-0.5px]">RSI</span>`,
    `<span class="text-[22px] leading-none font-bold text-[#c83030] drop-shadow-[1px_1px_0_#888]">S</span>`,
    `<svg class="w-[24px] h-[24px]" viewBox="0 0 24 24"><path d="M12 1 L16 6 H13.500 V10.500 H18 V8 L23 12 L18 16 V13.500 H13.500 V18 H16 L12 23 L8 18 H10.500 V13.500 H6 V16 L1 12 L6 8 V10.500 H10.500 V6 H8 Z" fill="#1a50c0"/></svg>`,
    `<svg class="w-[24px] h-[24px]" viewBox="0 0 24 24"><path d="M18 2 L22 6 L8 20 L2 22 L4 16 Z" fill="#f0b030" stroke="#a07020"/><path d="M18 2 L22 6 L20 8 L16 4 Z" fill="#d06050"/></svg>`,
    "sep",
    label("F5"),
    `<span class="w-[26px] h-[26px] border-2 border-[#5b9ae0] flex items-center justify-center"><svg class="w-[20px] h-[20px]" viewBox="0 0 20 20"><path d="M3 9 A7 7 0 0 1 16 7 L18 5 V11 H12 L14 9 A5 5 0 0 0 5 10 Z" fill="#6cc040"/><path d="M17 11 A7 7 0 0 1 4 13 L2 15 V9 H8 L6 11 A5 5 0 0 0 15 10 Z" fill="#90d060"/></svg></span>`,
    "1","5","15","30","60","日","周","月","N","多","季","年"
  ];
  document.getElementById("strip").innerHTML = items.map(it => {
    if (it === "sep") return `<span class="block w-[30px] h-[1px] my-[6px] bg-[#b0b0b0]"></span>`;
    if (it === "日") return `<span class="w-[32px] h-[34.5px] shrink-0 flex items-center justify-center bg-[#f8f8f8] border-t-2 border-l-2 border-[#b8b8b8] text-[22px]">${it}</span>`;
    return `<span class="h-[34.5px] shrink-0 flex items-center justify-center ${it.length < 3 ? "text-[18px]" : ""}">${it}</span>`;
  }).join("");
</script>
</body>
</html>
